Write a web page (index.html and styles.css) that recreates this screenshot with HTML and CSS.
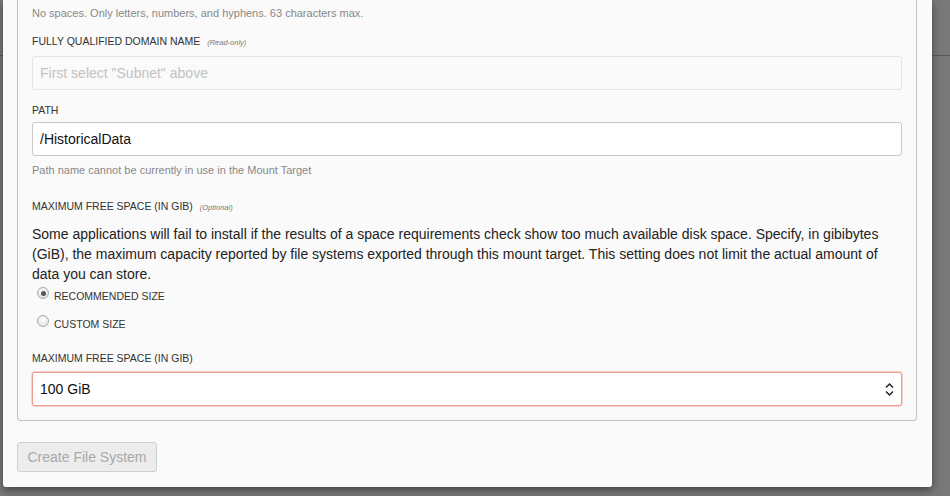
FILE: index.html
```html
<!DOCTYPE html>
<html lang="en">
<head>
<meta charset="utf-8">
<title>Create File System</title>
<link rel="stylesheet" href="styles.css">
</head>
<body>
<div class="modal">
  <div class="fieldset">
    <p class="help help-top">No spaces. Only letters, numbers, and hyphens. 63 characters max.</p>

    <label class="lbl lbl-fqdn">FULLY QUALIFIED DOMAIN NAME <span class="note">(Read-only)</span></label>
    <input class="input input-ro" type="text" placeholder="First select &quot;Subnet&quot; above" readonly>

    <label class="lbl lbl-path">PATH</label>
    <input class="input" type="text" value="/HistoricalData">
    <p class="help help-path">Path name cannot be currently in use in the Mount Target</p>

    <label class="lbl lbl-max">MAXIMUM FREE SPACE (IN GIB) <span class="note">(Optional)</span></label>
    <p class="desc">Some applications will fail to install if the results of a space requirements check show too much available disk space. Specify, in gibibytes (GiB), the maximum capacity reported by file systems exported through this mount target. This setting does not limit the actual amount of data you can store.</p>

    <label class="radio-row">
      <input class="radio" type="radio" name="size" checked>
      <span class="radio-text">RECOMMENDED SIZE</span>
    </label>
    <label class="radio-row radio-row-2">
      <input class="radio" type="radio" name="size">
      <span class="radio-text">CUSTOM SIZE</span>
    </label>

    <label class="lbl lbl-max2">MAXIMUM FREE SPACE (IN GIB)</label>
    <div class="select-wrap">
      <select class="select">
        <option>100 GiB</option>
      </select>
      <svg class="chev" width="9" height="15" viewBox="0 0 9 15" aria-hidden="true">
        <path d="M1 5.5 L4.5 2 L8 5.5" fill="none" stroke="#222" stroke-width="1.5"/>
        <path d="M1 9.5 L4.5 13 L8 9.5" fill="none" stroke="#222" stroke-width="1.5"/>
      </svg>
    </div>
  </div>

  <div class="actions">
    <button class="btn" type="button" disabled>Create File System</button>
  </div>
</div>
</body>
</html>
```

FILE: styles.css
```css
* {
  box-sizing: border-box;
}

html, body {
  margin: 0;
  padding: 0;
  height: 100%;
  overflow: hidden;
}

body {
  background:
    linear-gradient(to bottom, transparent 55px, #585858 55px, #585858 56px, transparent 56px),
    #787878;
  font-family: "Liberation Sans", Arial, sans-serif;
  color: #333;
}

.modal {
  margin-left: 3px;
  width: 929px;
  height: 487px;
  background: #fafafa;
  padding: 0 14px;
  box-shadow: 0 3px 8px rgba(0, 0, 0, 0.45);
  border-radius: 0 0 3px 3px;
}

.fieldset {
  width: 900px;
  border: 1px solid #bcc3cb;
  border-top: none;
  border-radius: 0 0 4px 4px;
  padding: 5px 14px 14px;
  display: flex;
  flex-direction: column;
  align-items: stretch;
}

.help {
  margin: 0;
  font-size: 11px;
  line-height: 16px;
  color: #888;
}

.help-path {
  margin-top: 6px;
}

.lbl {
  display: flex;
  align-items: baseline;
  height: 16px;
  font-size: 10.5px;
  line-height: 16px;
  color: #333;
  white-space: pre;
}

.note {
  font-size: 7.5px;
  line-height: 16px;
  font-style: italic;
  color: #777;
  margin-left: 4px;
}

.lbl-fqdn {
  margin-top: 12px;
  margin-bottom: 7px;
}

.lbl-path {
  margin-top: 12px;
  margin-bottom: 4px;
}

.lbl-max {
  margin-top: 20px;
}

.lbl-max2 {
  margin-top: 18px;
  margin-bottom: 6px;
}

.input {
  display: block;
  width: 100%;
  height: 34px;
  padding: 0 7px;
  border: 1px solid #c8c8c8;
  border-radius: 3px;
  background: #fff;
  font-family: "Liberation Sans", Arial, sans-serif;
  font-size: 14px;
  color: #111;
  outline: none;
}

.input-ro {
  background: #fafafa;
  border-color: #e4e4e4;
}

.input-ro::placeholder {
  color: #c2c2c2;
}

.desc {
  margin: 10px 0 0;
  font-size: 14px;
  line-height: 20px;
  color: #222;
}

.radio-row {
  display: flex;
  align-items: flex-start;
  height: 20px;
  padding-left: 5px;
}

.radio-row-2 {
  margin-top: 8px;
}

.radio {
  appearance: none;
  -webkit-appearance: none;
  margin: 3px 5px 0 0;
  width: 12px;
  height: 12px;
  border-radius: 50%;
  border: 1px solid #aaa;
  background: radial-gradient(circle at 50% 35%, #fdfdfd 0%, #e6e6e6 70%, #d8d8d8 100%);
  position: relative;
  flex: none;
}

.radio:checked::after {
  content: "";
  position: absolute;
  left: 2.5px;
  top: 2.5px;
  width: 5px;
  height: 5px;
  border-radius: 50%;
  background: #555;
}

.radio-text {
  margin-top: 4px;
  font-size: 10.5px;
  line-height: 16px;
  color: #333;
}

.select-wrap {
  position: relative;
}

.select {
  appearance: none;
  -webkit-appearance: none;
  display: block;
  width: 100%;
  height: 34px;
  padding: 0 7px;
  border: 1px solid #ee9c90;
  box-shadow: 0 0 0 1px rgba(240, 165, 155, 0.45);
  border-radius: 3px;
  background: #fff;
  font-family: "Liberation Sans", Arial, sans-serif;
  font-size: 14px;
  color: #111;
  outline: none;
}

.chev {
  position: absolute;
  right: 8px;
  top: 10px;
  pointer-events: none;
}

.actions {
  margin-top: 21px;
}

.btn {
  width: 140px;
  height: 30px;
  padding: 0;
  border: 1px solid #cfcfcf;
  border-radius: 3px;
  background: #ececec;
  font-family: "Liberation Sans", Arial, sans-serif;
  font-size: 14px;
  color: #a9a9a9;
}
```
